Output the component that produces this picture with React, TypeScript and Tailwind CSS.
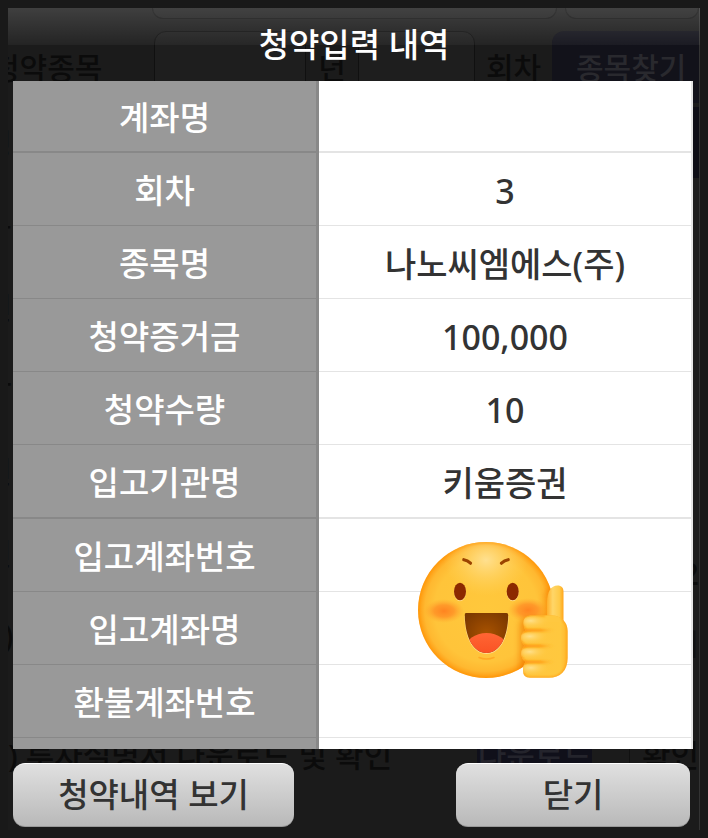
import React from "react";

const rows = [
  { label: "계좌명", value: "", height: "h-[72px]", line: "border-b-2" },
  { label: "회차", value: "3", height: "h-[73px]", line: "border-b" },
  { label: "종목명", value: "나노씨엠에스(주)", height: "h-[73px]", line: "border-b" },
  { label: "청약증거금", value: "100,000", height: "h-[73px]", line: "border-b" },
  { label: "청약수량", value: "10", height: "h-[73px]", line: "border-b" },
  { label: "입고기관명", value: "키움증권", height: "h-[74px]", line: "border-b-2" },
  { label: "입고계좌번호", value: "", height: "h-[73px]", line: "border-b" },
  { label: "입고계좌명", value: "", height: "h-[73px]", line: "border-b" },
  { label: "환불계좌번호", value: "", height: "h-[73px]", line: "border-b" },
];

function ThumbsUp() {
  return (
    <svg viewBox="0 0 150 136" className="absolute right-[125px] bottom-[71px] w-[150px] h-[136px]" aria-hidden="true">
      <defs>
        <radialGradient id="face" cx="0.5" cy="0.5" r="0.5">
          <stop offset="0" stopColor="#ffc83c" />
          <stop offset="0.76" stopColor="#ffc43a" />
          <stop offset="0.9" stopColor="#ffb830" />
          <stop offset="1" stopColor="#ff9a10" />
        </radialGradient>
        <radialGradient id="shine" cx="0.5" cy="0.5" r="0.5">
          <stop offset="0" stopColor="#ffe090" />
          <stop offset="1" stopColor="#ffd35c" stopOpacity="0" />
        </radialGradient>
        <radialGradient id="cheek" cx="0.5" cy="0.5" r="0.5">
          <stop offset="0" stopColor="#ff8420" />
          <stop offset="0.5" stopColor="#ff8c24" stopOpacity="0.75" />
          <stop offset="1" stopColor="#ffa62c" stopOpacity="0" />
        </radialGradient>
        <radialGradient id="mouth" cx="0.5" cy="0.5" r="0.6">
          <stop offset="0" stopColor="#a85200" />
          <stop offset="1" stopColor="#7c3900" />
        </radialGradient>
        <linearGradient id="tongue" x1="0" y1="0" x2="0" y2="1">
          <stop offset="0" stopColor="#ff6534" />
          <stop offset="1" stopColor="#f84a1c" />
        </linearGradient>
        <linearGradient id="palm" x1="0" y1="0" x2="1" y2="0">
          <stop offset="0" stopColor="#ffc640" />
          <stop offset="0.85" stopColor="#ffc83e" />
          <stop offset="1" stopColor="#ffb52c" />
        </linearGradient>
        <linearGradient id="thumb" x1="0" y1="0" x2="1" y2="0">
          <stop offset="0" stopColor="#ffb02a" />
          <stop offset="0.35" stopColor="#ffd668" />
          <stop offset="0.75" stopColor="#ffca48" />
          <stop offset="1" stopColor="#ffa51c" />
        </linearGradient>
        <radialGradient id="glow" cx="0.35" cy="0.4" r="0.65">
          <stop offset="0" stopColor="#ffe08a" />
          <stop offset="1" stopColor="#ffcb45" stopOpacity="0" />
        </radialGradient>
        <linearGradient id="crease" x1="0" y1="0" x2="1" y2="0">
          <stop offset="0" stopColor="#ff8f08" />
          <stop offset="0.6" stopColor="#ff9a12" />
          <stop offset="1" stopColor="#ffb52a" stopOpacity="0" />
        </linearGradient>
        <clipPath id="faceClip">
          <circle cx="68" cy="68" r="68" />
        </clipPath>
        <clipPath id="mouthClip">
          <path d="M48 71H88.500Q90.300 71 90.200 73C90 96 81 111 68.500 111S47 96 46.800 73Q46.500 71 48 71Z" />
        </clipPath>
        <filter id="soft" x="-50%" y="-50%" width="200%" height="200%">
          <feGaussianBlur stdDeviation="3" />
        </filter>
        <filter id="edge" x="-20%" y="-20%" width="140%" height="140%">
          <feGaussianBlur stdDeviation="0.9" />
        </filter>
        <path
          id="fist"
          d="M113 73.500H134C143 73.500 149.600 80 149.600 89V116C149.600 129 142 135.800 131 135.800H112Q105 135.800 105 128.500Q105 122 108 120Q103.200 117 103.200 112Q103.200 106 107 103.800Q103 101 103 96Q103 90.500 107.500 88.500Q105.500 86 105.500 81Q105.500 73.500 113 73.500Z"
        />
        <clipPath id="fistClip">
          <use href="#fist" />
        </clipPath>
      </defs>
      <circle cx="68" cy="68" r="68" fill="url(#face)" />
      <g clipPath="url(#faceClip)">
        <ellipse cx="68" cy="18" rx="42" ry="36" fill="url(#shine)" />
        <ellipse cx="26" cy="69" rx="20" ry="12" fill="url(#cheek)" />
        <ellipse cx="110" cy="68" rx="20" ry="12" fill="url(#cheek)" />
        <circle cx="68" cy="68" r="67.500" fill="none" stroke="#ff960c" strokeWidth="1" filter="url(#edge)" />
        <rect x="102" y="75" width="36" height="64" rx="8" fill="#f07c00" opacity="0.700" filter="url(#soft)" />
        <rect x="127" y="46" width="16" height="38" rx="7" fill="#f58200" opacity="0.700" filter="url(#soft)" />
      </g>
      <g fill="none" stroke="#9b4300" strokeWidth="3.200" strokeLinecap="round">
        <path d="M45.800 17.700Q49.500 18.400 52.500 21.200" />
        <path d="M83.500 21.200Q86.500 18.400 90.200 17.700" />
      </g>
      <ellipse cx="42" cy="50.500" rx="6" ry="8.800" fill="#ffd981" />
      <ellipse cx="94.700" cy="50.500" rx="6" ry="8.800" fill="#ffd981" />
      <ellipse cx="42" cy="49.500" rx="6" ry="8.800" fill="#8c2900" />
      <ellipse cx="94.700" cy="49.500" rx="6" ry="8.800" fill="#8c2900" />
      <path d="M46.500 74C46.700 97 55.500 112 68.500 112S90.300 97 90.500 74Z" fill="#ffdd90" />
      <g clipPath="url(#mouthClip)">
        <rect x="46" y="71" width="45" height="41" fill="url(#mouth)" />
        <ellipse cx="68.500" cy="106" rx="21" ry="15" fill="url(#tongue)" />
      </g>
      <path d="M61 115.500Q68.500 118.500 76 115.500" fill="none" stroke="#ffaa24" strokeWidth="1.500" strokeLinecap="round" />
      <path d="M129 80V61C129 50 133 43.600 139.500 43.600C143.500 43.600 145.500 46 145.500 50V80Z" fill="url(#thumb)" />
      <use href="#fist" fill="url(#palm)" />
      <g clipPath="url(#fistClip)">
        <use href="#fist" fill="none" stroke="#ffa01a" strokeWidth="2" filter="url(#edge)" />
        <rect x="127" y="72" width="16" height="8" fill="#ffc840" filter="url(#edge)" />
        <ellipse cx="117" cy="80" rx="14" ry="6" fill="url(#glow)" />
        <ellipse cx="116" cy="95.500" rx="14" ry="6" fill="url(#glow)" />
        <ellipse cx="116" cy="111" rx="14" ry="6" fill="url(#glow)" />
        <ellipse cx="117" cy="127" rx="14" ry="6" fill="url(#glow)" />
        <g fill="url(#crease)" filter="url(#edge)">
          <rect x="104" y="87" width="32" height="2.500" rx="1.200" />
          <rect x="104" y="102.800" width="32" height="2.500" rx="1.200" />
          <rect x="104" y="118.800" width="32" height="2.500" rx="1.200" />
        </g>
      </g>
    </svg>
  );
}

// dimmed order form that stays visible around the popup
function Backdrop() {
  return (
    <div className="absolute inset-0 flex flex-col overflow-hidden bg-[#1b1b1b] border-r border-[#333] text-[30px] text-[#0b0b0b] whitespace-nowrap" aria-hidden="true">
      <div className="flex gap-2 pl-36 h-[11px] shrink-0">
        <div className="w-[405px] rounded-b-xl border border-t-0 border-[#111] bg-[#1e1e1e]" />
        <div className="flex-1 rounded-b-xl border border-t-0 border-[#111] bg-[#1e1e1e]" />
      </div>
      <div className="flex mt-3 h-[72px] shrink-0 items-stretch">
        <div className="w-[146px] flex items-center justify-start">
          <span className="-ml-4">청약종목</span>
        </div>
        <div className="w-[152px] rounded-xl border border-[#101010] bg-[#1e1e1e]" />
        <div className="w-[52px] flex items-center justify-center">년</div>
        <div className="w-[117px] rounded-xl border border-[#101010] bg-[#1e1e1e]" />
        <div className="w-[77px] flex items-center justify-center">회차</div>
        <div className="flex-1 min-w-0 rounded-l-xl bg-[#12121a] text-[#29292e] flex items-center pl-6">종목찾기</div>
      </div>
      <div className="flex flex-1 justify-between">
        <div className="flex flex-col w-8">
          {["청", "구", "번", "상", "번", "민"].map((ch, i) => (
            <span key={i} className="h-[82px] -ml-6 leading-[82px]">{ch}</span>
          ))}
          <span className="-ml-1 leading-[82px]">)</span>
        </div>
        <div className="w-8 text-right">
          <div className="h-[71px] mt-1 mb-[376px] bg-[#0e0e16]" />
          <div className="leading-[40px]">2</div>
          <div className="leading-[100px] text-[#111]">시</div>
        </div>
      </div>
      <div className="flex h-[100px] shrink-0 items-start text-[31px]">
        <div className="w-[474px] leading-[50px]">) 투자설명서 다운로드 및 확인</div>
        <div className="w-[116px] leading-[50px] text-center bg-[#10101a] text-[#24242c]">다운로드</div>
        <div className="w-[38px] h-[52px] border-r border-[#111]" />
        <div className="leading-[50px] pl-3">확인</div>
      </div>
    </div>
  );
}

export default function App() {
  return (
    <div className="min-h-screen bg-[#191919] p-2 text-[33px] font-medium font-['Noto_Sans','Noto_Sans_CJK_KR',sans-serif]">
      <div className="relative min-h-[822px]">
        <Backdrop />
        <section role="dialog" aria-labelledby="popup-title" className="relative">
          <header className="relative h-[73px] flex items-center justify-center">
            <div className="absolute inset-x-0 top-0 h-[37px] bg-linear-to-b from-white/16 to-white/4" />
            <h1 id="popup-title" className="relative text-white">청약입력 내역</h1>
          </header>

          <div className="relative ml-[5px] mr-[7px] bg-white">
            <table className="w-full table-fixed border-separate border-spacing-0">
              <tbody>
                {rows.map((row) => (
                  <tr key={row.label} className={row.height}>
                    <th
                      scope="row"
                      className={`${row.line} w-[45%] p-0 pt-1 text-center font-medium leading-10 text-white bg-[#999] border-r-[3px] border-[#888]`}
                    >
                      {row.label}
                    </th>
                    <td className={`${row.line} p-0 pt-1 text-center text-[34px] leading-10 text-[#333] border-r-2 border-[#e4e4e4]`}>
                      {row.value}
                    </td>
                  </tr>
                ))}
                <tr className="h-[11px]">
                  <td className="p-0 bg-[#999] border-r-[3px] border-[#888]" />
                  <td className="p-0 border-r-2 border-[#e4e4e4]" />
                </tr>
              </tbody>
            </table>
            <ThumbsUp />
          </div>

          <footer className="flex justify-between mt-[14px] ml-[5px] mr-[10px] text-[#333]">
            <button className="w-[281px] h-16 rounded-xl border-t border-b border-t-white border-b-[#999] bg-linear-to-b from-[#e0e0e0] to-[#b9b9b9]">
              청약내역 보기
            </button>
            <button className="w-[234px] h-16 rounded-xl border-t border-b border-t-white border-b-[#999] bg-linear-to-b from-[#e0e0e0] to-[#b9b9b9]">
              닫기
            </button>
          </footer>
        </section>
      </div>
    </div>
  );
}
